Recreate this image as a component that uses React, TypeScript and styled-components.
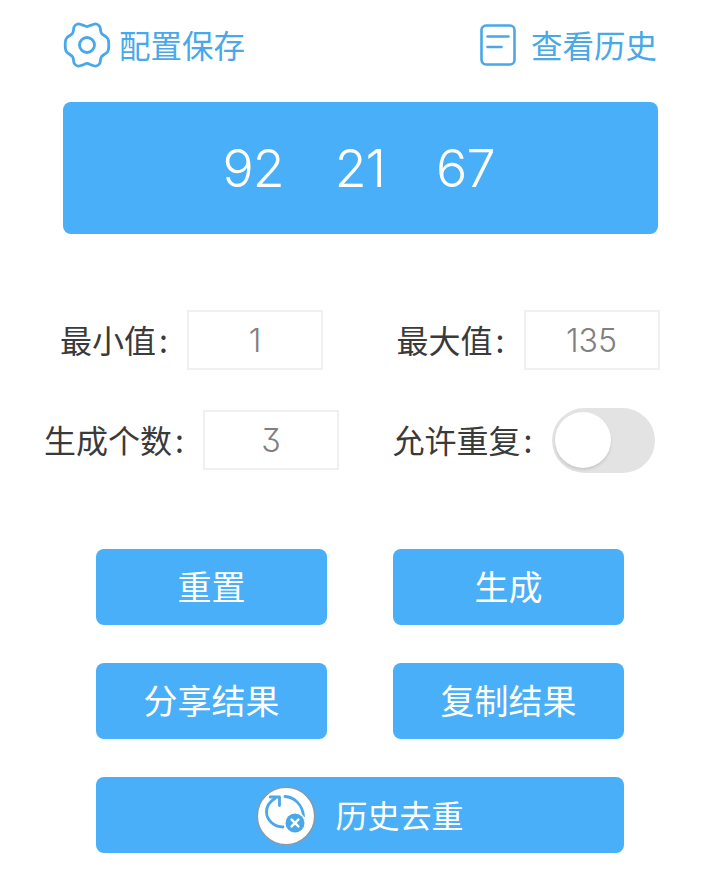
import React from "react";
import styled, { createGlobalStyle } from "styled-components";

const Global = createGlobalStyle`
  html, body { margin: 0; padding: 0; background: #fff; }
  body { font-family: "Noto Sans CJK SC", sans-serif; }
`;

const Page = styled.div`
  width: 720px;
  height: 874px;
  display: flex;
  flex-direction: column;
  overflow: hidden;
`;

const TopBar = styled.div`
  height: 90px;
  padding: 0 63px;
  margin-bottom: 12px;
  display: flex;
  align-items: center;
  justify-content: space-between;
`;

const TopLink = styled.div<{ $gap: number }>`
  display: flex;
  align-items: center;
  gap: ${(p) => p.$gap}px;
  color: #4aa8e8;
`;

const Text = styled.span<{ $size: number }>`
  font-size: ${(p) => p.$size}px;
  line-height: 48px;
  white-space: nowrap;
  margin-top: -3px;
`;

const Display = styled.div`
  margin: 0 62px 0 63px;
  padding-right: 4px;
  height: 132px;
  border-radius: 8px;
  background: #49aff8;
  color: #fff;
  font-family: Inter, sans-serif;
  font-weight: 300;
  font-size: 52px;
  letter-spacing: -1px;
  display: flex;
  align-items: center;
  justify-content: center;
  gap: 51px;
`;

const Form = styled.div`
  margin: 74px 0 0 23.5px;
  display: grid;
  grid-template-columns: 336px 337px;
  row-gap: 36px;
`;

const Field = styled.div<{ $shift?: number }>`
  height: 64px;
  display: flex;
  align-items: center;
  justify-content: center;
  padding-right: ${(p) => p.$shift ?? 0}px;
  color: #3a3a3a;
`;

const Colon = styled.span`
  display: inline-block;
  width: 31px;
  padding-left: 3px;
  box-sizing: border-box;
`;

const ValueBox = styled.div<{ $flat?: boolean }>`
  box-sizing: border-box;
  width: 136px;
  height: 60px;
  border: 2px solid #f0f0f0;
  color: #808080;
  font-family: Inter, sans-serif;
  font-weight: 300;
  font-size: 32px;
  font-feature-settings: ${(p) => (p.$flat ? '"cv09"' : "normal")};
  display: flex;
  align-items: center;
  justify-content: center;
`;

const Toggle = styled.div`
  position: relative;
  width: 103px;
  height: 65px;
  border-radius: 33px;
  background: #e3e3e3;
`;

const Knob = styled.div`
  position: absolute;
  left: 3px;
  top: 4px;
  width: 56px;
  height: 56px;
  border-radius: 50%;
  background: #fff;
  box-shadow: 0 2px 3px rgba(0, 0, 0, 0.12);
`;

const Buttons = styled.div`
  margin: 77px 96px 0;
  display: grid;
  grid-template-columns: 231px 231px;
  justify-content: space-between;
  row-gap: 38px;
`;

const Button = styled.div<{ $wide?: boolean }>`
  grid-column: ${(p) => (p.$wide ? "1 / -1" : "auto")};
  height: 76px;
  border-radius: 8px;
  background: #49aff8;
  color: #fff;
  display: flex;
  align-items: center;
  justify-content: center;
  gap: 19px;
`;

const DedupSvg = styled.svg`
  margin-top: 1px;
`;

/* One quarter of the gear's outline, from the left lobe to the top notch. */
const gearQuarter: [number, number][] = [
  [2.2, 24], [2.6, 19.5], [4, 16.6], [9.6, 12.2], [11.2, 5.6], [14.6, 3], [19, 3.8], [24, 5.6],
];

const gearPoints: [number, number][] = [
  ...gearQuarter,
  ...gearQuarter.slice(0, -1).reverse().map(([x, y]): [number, number] => [48 - x, y]),
  ...gearQuarter.slice(1).map(([x, y]): [number, number] => [48 - x, 48 - y]),
  ...gearQuarter.slice(1, -1).reverse().map(([x, y]): [number, number] => [x, 48 - y]),
];

const gearPath = (() => {
  const n = gearPoints.length;
  let d = `M${gearPoints[0].join(" ")}`;
  for (let i = 0; i < n; i++) {
    const p0 = gearPoints[(i + n - 1) % n];
    const p1 = gearPoints[i];
    const p2 = gearPoints[(i + 1) % n];
    const p3 = gearPoints[(i + 2) % n];
    const c1 = [p1[0] + (p2[0] - p0[0]) / 6, p1[1] + (p2[1] - p0[1]) / 6];
    const c2 = [p2[0] - (p3[0] - p1[0]) / 6, p2[1] - (p3[1] - p1[1]) / 6];
    d += `C${c1[0].toFixed(2)} ${c1[1].toFixed(2)} ${c2[0].toFixed(2)} ${c2[1].toFixed(2)} ${p2[0]} ${p2[1]}`;
  }
  return `${d}Z`;
})();

const Gear = () => (
  <svg width="48" height="48" viewBox="0 0 48 48" fill="none" stroke="#4aa8e8" strokeWidth="2.800" strokeLinejoin="round">
    <path d={gearPath} />
    <circle cx="24" cy="24" r="7.500" />
  </svg>
);

const Doc = () => (
  <svg width="36" height="42" viewBox="0 0 36 42" fill="none" stroke="#4aa8e8" strokeWidth="2.600" strokeLinecap="round">
    <rect x="1.500" y="1.500" width="33" height="39" rx="4.500" />
    <path d="M7.500 12.500h21M7.500 23h14" />
  </svg>
);

const Dedup = () => (
  <DedupSvg width="60" height="60" viewBox="0 0 60 60" fill="none">
    <circle cx="30" cy="30" r="28.700" fill="#fff" stroke="#8a9aa6" strokeWidth="1.500" />
    <g stroke="#4aa8e8" strokeWidth="2.800" strokeLinecap="round" strokeLinejoin="round">
      <path d="M14.300 11H23.500V19.500" />
      <path d="M19 12.500C13 16 10.500 21 10.500 26C10.500 34 18 41 27 41" />
      <path d="M29 10.500C38 11 46.500 18.500 47.500 30" />
    </g>
    <circle cx="39" cy="37" r="11" fill="#fff" />
    <circle cx="39" cy="37" r="9.500" fill="#4aa8e8" />
    <path d="M35.600 33.600l6.800 6.800M42.400 33.600l-6.800 6.800" stroke="#fff" strokeWidth="2.400" strokeLinecap="round" />
  </DedupSvg>
);

export default function App() {
  return (
    <Page>
      <Global />
      <TopBar>
        <TopLink $gap={8}><Gear /><Text $size={31.5}>配置保存</Text></TopLink>
        <TopLink $gap={15}><Doc /><Text $size={31.5}>查看历史</Text></TopLink>
      </TopBar>
      <Display><span>92</span><span>21</span><span>67</span></Display>
      <Form>
        <Field><Text $size={32}>最小值<Colon>:</Colon></Text><ValueBox>1</ValueBox></Field>
        <Field><Text $size={32}>最大值<Colon>:</Colon></Text><ValueBox>135</ValueBox></Field>
        <Field><Text $size={32}>生成个数<Colon>:</Colon></Text><ValueBox $flat>3</ValueBox></Field>
        <Field $shift={9}>
          <Text $size={32}>允许重复<Colon>:</Colon></Text>
          <Toggle><Knob /></Toggle>
        </Field>
      </Form>
      <Buttons>
        <Button><Text $size={34}>重置</Text></Button>
        <Button><Text $size={34}>生成</Text></Button>
        <Button><Text $size={34}>分享结果</Text></Button>
        <Button><Text $size={34}>复制结果</Text></Button>
        <Button $wide><Dedup /><Text $size={32}>历史去重</Text></Button>
      </Buttons>
    </Page>
  );
}
